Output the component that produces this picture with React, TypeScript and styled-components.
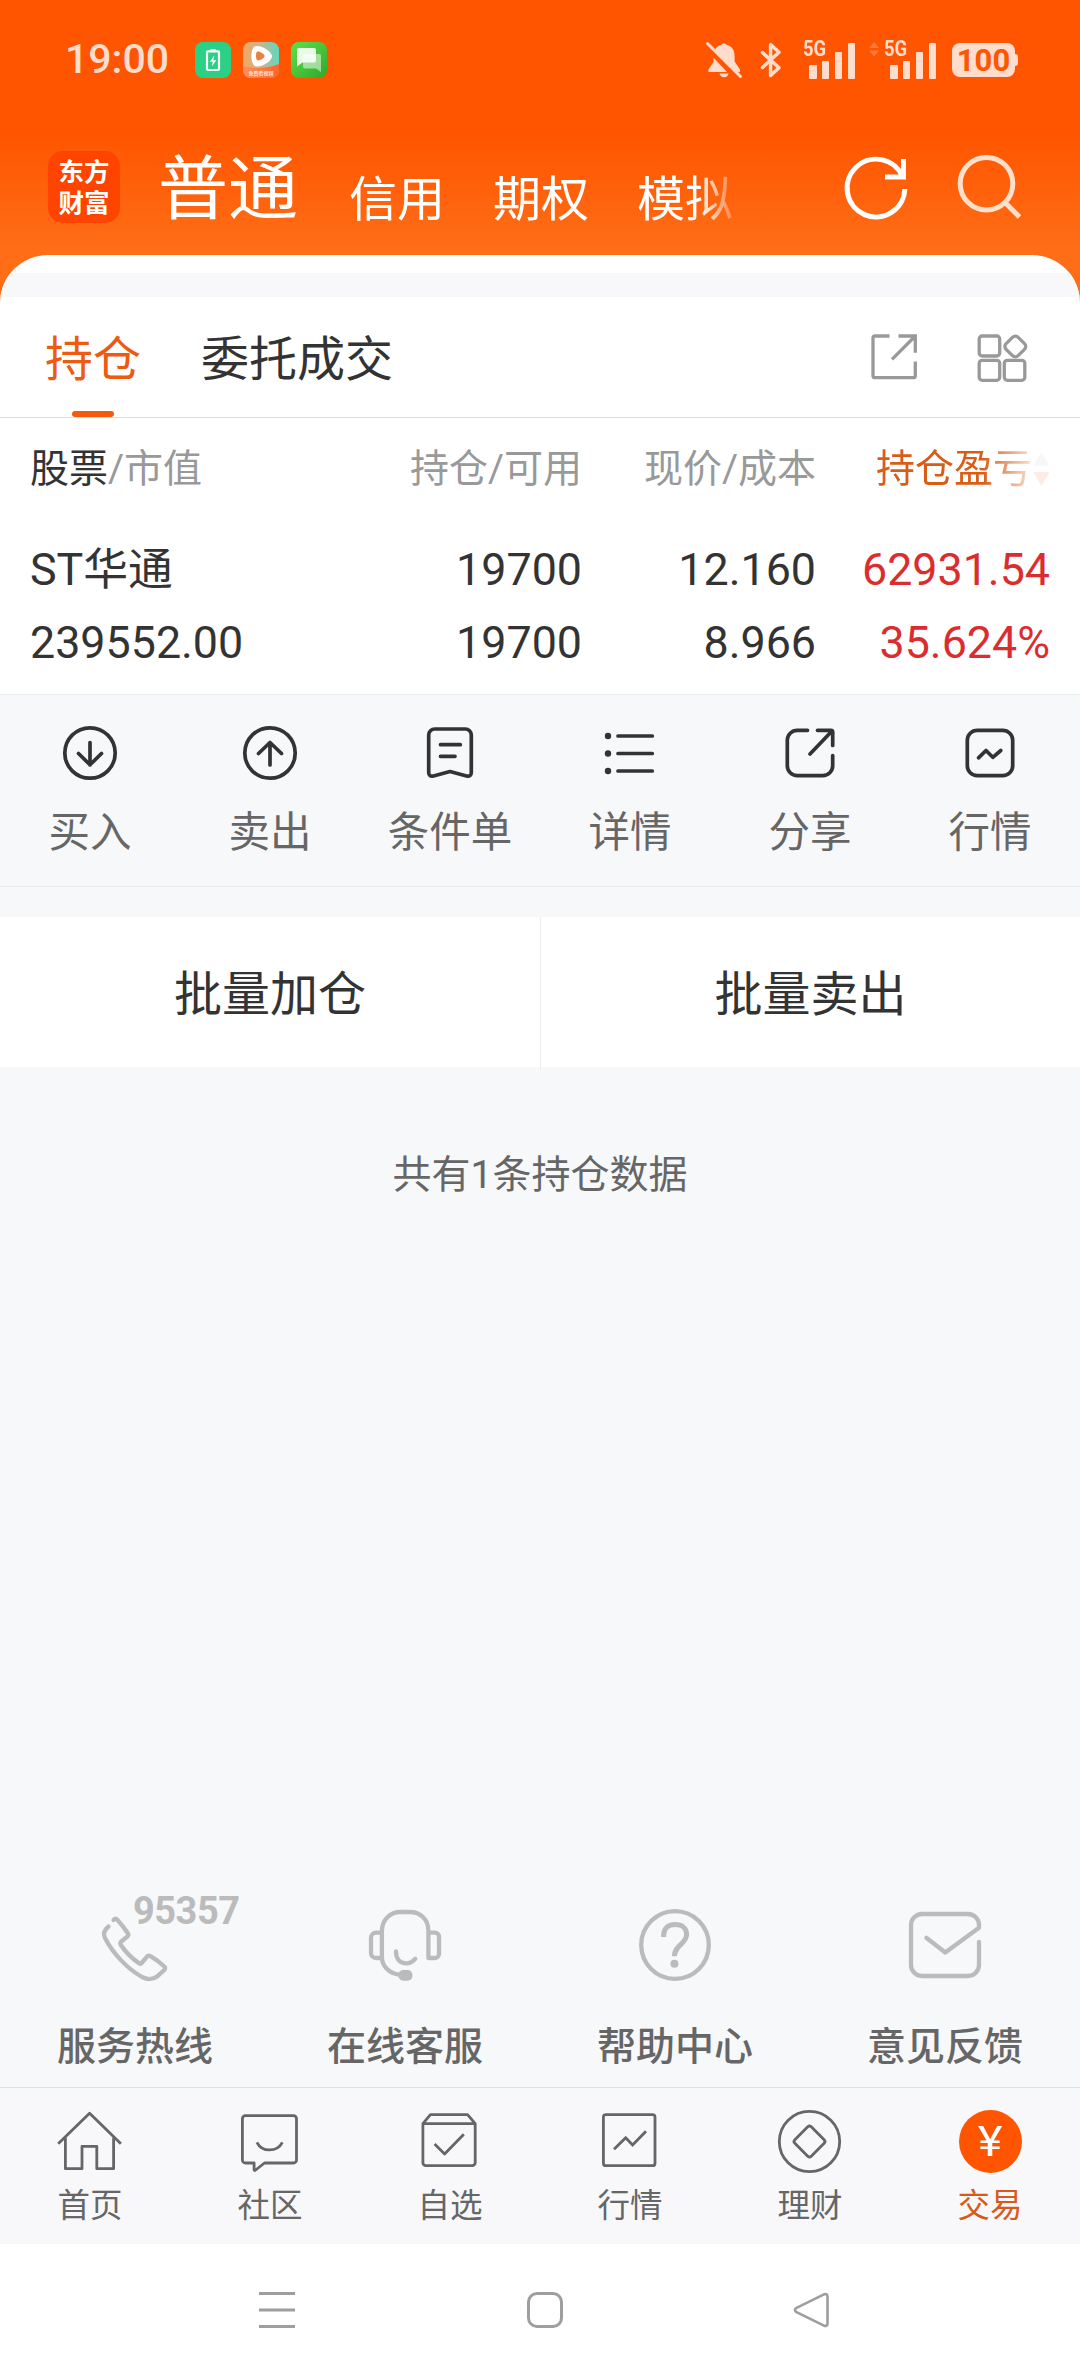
import React from "react";
import styled, { createGlobalStyle } from "styled-components";

const GlobalStyle = createGlobalStyle`
  * { box-sizing: border-box; }
  body {
    margin: 0;
    background: #f7f8fa;
    font-family: Roboto, "Noto Sans CJK SC", sans-serif;
    -webkit-font-smoothing: antialiased;
  }
  svg { display: block; flex: none; overflow: visible; }
`;

const Screen = styled.div`
  width: 1080px;
  height: 2376px;
  display: flex;
  flex-direction: column;
  overflow: hidden;
  background: #f7f8fa;
`;

/* ---------- status bar + header ---------- */

const Hero = styled.header`
  height: 303px;
  margin-bottom: -48px;
  flex: none;
  background: linear-gradient(#ff5500 0, #ff5500 132px, #ff6d17 250px, #ff6d17 100%);
`;

const StatusBar = styled.div`
  height: 120px;
  padding: 0 62px 0 65px;
  display: flex;
  align-items: center;
  color: #ffdccb;
`;

const Clock = styled.span`
  width: 130px;
  font-size: 41px;
  font-weight: 500;
  line-height: 48px;
  padding-bottom: 3px;
`;

const AppBadges = styled.div`
  display: flex;
  gap: 12px;
`;

const StatusIcons = styled.div`
  margin-left: auto;
  display: flex;
  align-items: center;
`;

const Gap = styled.i<{ $w: number }>`
  width: ${(p) => p.$w}px;
`;

const SignalBox = styled.div`
  position: relative;
  width: 52px;
  height: 37px;
  display: flex;
  align-items: flex-end;
  justify-content: flex-end;
  gap: 5.3px;
`;

const SignalBar = styled.i<{ $h: number }>`
  width: 7.5px;
  height: ${(p) => p.$h}px;
  border-radius: 1px;
  background: currentColor;
`;

const SignalTag = styled.span`
  position: absolute;
  left: 0;
  top: -4px;
  font-size: 22px;
  line-height: 22px;
  font-weight: 700;
  transform: scaleX(0.84);
  transform-origin: left;
`;

const Battery = styled.div`
  position: relative;
  width: 63px;
  height: 34px;
  margin-right: 3px;
  border-radius: 8px;
  background: #ffdccb;
  color: #ff5500;
  font-size: 31px;
  line-height: 35px;
  font-weight: 700;
  text-align: center;

  &::after {
    content: "";
    position: absolute;
    right: -3px;
    top: 11px;
    width: 3px;
    height: 12px;
    border-radius: 0 3px 3px 0;
    background: #ffdccb;
  }
`;

const AccountBar = styled.nav`
  height: 135px;
  padding: 0 60px 0 48px;
  display: flex;
  align-items: flex-start;
`;

const Logo = styled.div`
  width: 72px;
  height: 72px;
  margin-top: 31px;
  display: flex;
  flex-direction: column;
  align-items: center;
  justify-content: center;
  border-radius: 15px;
  background: #ff4400;
  color: #fff;
`;

const LogoLine = styled.span`
  font-size: 25.5px;
  line-height: 30px;
  font-weight: 700;
  padding-top: 1px;
`;

const Accounts = styled.div`
  display: flex;
  align-items: baseline;
  gap: 48px;
  margin: 15px 0 0 38px;
  width: 580px;
  height: 110px;
  overflow: hidden;
  color: #fff;
  mask-image: linear-gradient(90deg, #000 540px, transparent 584px);
`;

const Account = styled.span<{ $active?: boolean }>`
  margin-right: ${(p) => (p.$active ? 3 : 0)}px;
  padding-top: ${(p) => (p.$active ? 0 : 2)}px;
  font-size: ${(p) => (p.$active ? 70 : 48)}px;
  line-height: ${(p) => (p.$active ? 110 : 60)}px;
  align-self: ${(p) => (p.$active ? "baseline" : "flex-start")};
  margin-top: ${(p) => (p.$active ? 0 : 33)}px;
  font-weight: 400;
  white-space: nowrap;
`;

const HeaderTools = styled.div`
  margin: 34px 0 0 auto;
  display: flex;
  gap: 44px;
`;

/* ---------- positions card ---------- */

const Card = styled.section`
  flex: none;
  border-radius: 48px 48px 0 0;
  background: #fff;
  overflow: hidden;
`;

const CardStripe = styled.div`
  height: 24px;
  margin-top: 18px;
  background: #f8f8fb;
`;

const Tabs = styled.div`
  height: 121px;
  padding: 0 53px 0 45px;
  display: flex;
  gap: 60px;
  border-bottom: 1px solid #dddddd;
`;

const Tab = styled.div<{ $active?: boolean }>`
  height: 120px;
  padding-top: 33px;
  display: flex;
  flex-direction: column;
  align-items: center;
  justify-content: space-between;
  color: ${(p) => (p.$active ? "#ee5a0f" : "#333")};
  font-size: 48px;
  line-height: 60px;
`;

const TabMark = styled.i`
  width: 42px;
  height: 6px;
  border-radius: 3px;
  background: #f45a0e;
`;

const TabTools = styled.div`
  margin: 36px 0 0 auto;
  display: flex;
  gap: 59px;
`;

const HoldingGrid = styled.div`
  display: grid;
  grid-template-columns: 310px 242px 234px 234px;
  padding: 0 30px;
`;

const Head = styled.div<{ $tone?: "hot" }>`
  height: 102px;
  font-size: 39px;
  line-height: 102px;
  color: ${(p) => (p.$tone ? "#d95c17" : "#999")};
  text-align: right;
  white-space: nowrap;

  &:first-child { text-align: left; }
  em { color: #333; font-style: normal; }
`;

const SortHead = styled(Head)`
  display: flex;
  align-items: center;
  justify-content: flex-end;
  gap: 1px;
  mask-image: linear-gradient(90deg, #000 166px, rgba(0, 0, 0, 0.12) 220px);
`;

const Value = styled.div<{ $up?: boolean }>`
  height: 73px;
  font-size: 44.8px;
  line-height: 73px;
  color: ${(p) => (p.$up ? "#db2d2e" : "#333")};
  text-align: right;
  white-space: nowrap;

  &:nth-child(4n + 1) { text-align: left; }
`;

const Holdings = styled.div`
  height: 276px;
  display: flex;
  flex-direction: column;
  gap: 13px;
`;

/* ---------- actions ---------- */

const Actions = styled.div`
  flex: none;
  height: 193px;
  padding-top: 31px;
  display: grid;
  grid-template-columns: repeat(6, 1fr);
  border-top: 1px solid #ececee;
  border-bottom: 1px solid #ececee;
`;

const Action = styled.div`
  display: flex;
  flex-direction: column;
  align-items: center;
  gap: 28px;
  color: #666;
  font-size: 41.5px;
  line-height: 50px;
`;

const Batch = styled.div`
  flex: none;
  height: 150px;
  margin-top: 30px;
  display: grid;
  grid-template-columns: 540px 540px;
  background: #fff;
`;

const BatchButton = styled.div`
  padding-top: 3px;
  color: #333;
  font-size: 48px;
  line-height: 150px;
  text-align: center;

  & + & { border-left: 1px solid #ededed; }
`;

const Count = styled.p`
  flex: 1;
  margin: 83px 0 0;
  color: #666;
  font-size: 39px;
  line-height: 50px;
  text-align: center;
`;

/* ---------- service row ---------- */

const Services = styled.div`
  flex: none;
  height: 178px;
  display: grid;
  grid-template-columns: repeat(4, 1fr);
`;

const Service = styled.div`
  position: relative;
  display: flex;
  flex-direction: column;
  align-items: center;
  gap: 41px;
  color: #666;
  font-size: 39px;
  line-height: 50px;
  font-weight: 500;
`;

const HotlineNumber = styled.span`
  position: absolute;
  left: 133px;
  top: -18px;
  color: #bbb;
  font-size: 38px;
  line-height: 40px;
  font-weight: 700;
  letter-spacing: -0.5px;
`;

/* ---------- bottom bars ---------- */

const TabBar = styled.nav`
  flex: none;
  height: 157px;
  padding-top: 22px;
  display: grid;
  grid-template-columns: repeat(6, 1fr);
  border-top: 1px solid #dfe0e3;
  background: #f8f8fa;
`;

const TabItem = styled.div<{ $active?: boolean }>`
  display: flex;
  flex-direction: column;
  align-items: center;
  gap: 12px;
  color: ${(p) => (p.$active ? "#d9591a" : "#666")};
  font-size: 32.5px;
  line-height: 40px;
`;

const TradeCoin = styled.div`
  width: 63px;
  height: 63px;
  margin-bottom: 1px;
  border-radius: 50%;
  background: #ff5500;
  color: #fff;
  line-height: 64px;
  text-align: center;
`;

const Yuan = styled.span`
  display: inline-block;
  font-size: 42px;
  font-weight: 400;
  transform: scaleX(1.12);
`;

const SystemNav = styled.footer`
  flex: none;
  height: 132px;
  padding: 0 251px 0 259px;
  display: flex;
  align-items: center;
  justify-content: space-between;
  background: #fff;
`;

/* ---------- icons ---------- */

type IconProps = { size: number; stroke: string; width: number; round?: boolean; children: React.ReactNode };

const Icon = ({ size, stroke, width, round, children }: IconProps) => (
  <svg
    width={size}
    height={size}
    viewBox={`0 0 ${size} ${size}`}
    fill="none"
    stroke={stroke}
    strokeWidth={width}
    strokeLinecap={round ? "round" : "butt"}
    strokeLinejoin={round ? "round" : "miter"}
  >
    {children}
  </svg>
);

const ChargeBadge = () => (
  <svg width="36" height="36" viewBox="0 0 36 36">
    <rect width="36" height="36" rx="8" fill="#2ad184" />
    <rect x="12" y="9.3" width="12" height="18.7" rx="1" fill="none" stroke="#fff" strokeWidth="2.2" />
    <rect x="15.5" y="7" width="5" height="2.5" fill="#fff" />
    <path d="M19.3 13.5 14.8 19.8h3l-1 4.7 4.5-6.3h-3z" fill="#fff" />
  </svg>
);

const VideoBadge = () => (
  <svg width="36" height="36" viewBox="0 0 36 36">
    <defs>
      <linearGradient id="video" x1="0" y1="0.2" x2="1" y2="0.1">
        <stop offset="0" stopColor="#f3a765" />
        <stop offset="0.5" stopColor="#c9b48c" />
        <stop offset="1" stopColor="#54dcc8" />
      </linearGradient>
      <linearGradient id="videoFoot" x1="0" y1="0" x2="1" y2="0">
        <stop offset="0" stopColor="#ff8d5c" />
        <stop offset="1" stopColor="#ff6228" />
      </linearGradient>
      <clipPath id="videoClip"><rect width="36" height="36" rx="8" /></clipPath>
    </defs>
    <g clipPath="url(#videoClip)">
      <rect width="36" height="36" fill="url(#video)" />
      <path d="M0 24Q18 29 36 22V36H0z" fill="url(#videoFoot)" />
      <path d="M11.500 4.500C16.500 1.800 28.500 9 29 14C29.400 19 17 26.500 12 24C7.300 21.500 7.300 7 11.500 4.500z" fill="#fff" />
      <path d="M14.200 9.600C16 8.800 21.500 12 21.600 14C21.700 16 16 19.200 14.200 18.300C12.500 17.400 12.600 10.400 14.200 9.600z" fill="#e8813f" />
      <text x="18" y="33.300" fontSize="5" fontWeight="700" fill="#ffe3d3" textAnchor="middle">免费看视频</text>
    </g>
  </svg>
);

const ChatBadge = () => (
  <svg width="36" height="36" viewBox="0 0 36 36">
    <defs>
      <linearGradient id="chat" x1="0" y1="0" x2="1" y2="1">
        <stop offset="0" stopColor="#63de4b" />
        <stop offset="1" stopColor="#2faa2b" />
      </linearGradient>
    </defs>
    <rect width="36" height="36" rx="8" fill="url(#chat)" />
    <path d="M14 12H28.500Q30 12 30 13.500V30L25 26.500H14Q12 26.500 12 24.500V14Q12 12 14 12z" fill="#fff" opacity="0.5" />
    <path d="M8 6H23Q25 6 25 8V18.500Q25 20.500 23 20.500H11.500L6 24.500V8Q6 6 8 6z" fill="#fff" opacity="0.88" />
  </svg>
);

const MutedBell = () => (
  <svg width="36" height="36" viewBox="0 0 36 36">
    <path d="M17.900 1.300q2 0 2.400 1.500C26 4 28.600 8.500 28.600 14v5.500L34 27.500V30H2.400v-2.300L7.500 20v-6C7.500 8.500 10.500 4 15.500 2.800q.4-1.500 2.400-1.500z" fill="currentColor" />
    <path d="M13.400 31.600h9.300q-1 3.700-4.600 3.700t-4.700-3.700z" fill="currentColor" />
    <path d="M-1 2.500 31 36.500" stroke="#ff5500" strokeWidth="5.500" />
    <path d="M1.500 1.500 34.500 34.500" stroke="currentColor" strokeWidth="3" strokeLinecap="round" />
  </svg>
);

const Bluetooth = () => (
  <svg width="22" height="36" viewBox="0 0 22 36" fill="none" stroke="currentColor" strokeWidth="3.500" strokeLinejoin="round" strokeLinecap="round">
    <path d="M2.500 10.500 19 25.800 10.600 33.500V2.500L19 10.200 2.500 25.500" />
  </svg>
);

const Signal = () => (
  <SignalBox>
    <SignalTag>5G</SignalTag>
    <SignalBar $h={14} />
    <SignalBar $h={18} />
    <SignalBar $h={27} />
    <SignalBar $h={36} />
  </SignalBox>
);

const SortArrows = () => (
  <svg width="17" height="34" viewBox="0 0 17 34">
    <path d="M8.500 0 16.500 13.500H.5z" fill="#b8bcc4" />
    <path d="M8.500 34 .5 20H16.500z" fill="#f2601c" />
  </svg>
);

const actionIcon = { size: 54, stroke: "#333", width: 3.7, round: true };
const actions = [
  { label: "买入", art: <><circle cx="27" cy="27" r="25.200" /><path d="M27 16.500V39M15.500 27.500 27 38.800 38.500 27.500" /></> },
  { label: "卖出", art: <><circle cx="27" cy="27" r="25.200" /><path d="M27 39V16.500M15.500 27.500 27 16.500 38.500 27.500" /></> },
  {
    label: "条件单",
    art: <path d="M11.700 3H42.300a6 6 0 0 1 6 6V46.500Q48.300 51 43.500 50L27 45.500 10.500 50Q5.700 51 5.700 46.500V9a6 6 0 0 1 6-6zM17.500 18.700H37.300M17.500 30.300H32" />,
  },
  {
    label: "详情",
    art: <><path d="M15 10H49.300M15 27.500H49.300M15 45H49.300" /><g fill="#333" stroke="none"><circle cx="5" cy="10" r="3.200" /><circle cx="5" cy="27.500" r="3.200" /><circle cx="5" cy="45" r="3.200" /></g></>,
  },
  {
    label: "分享",
    art: <path d="M24.500 4.300H14.300a10 10 0 0 0-10 10V39.700a10 10 0 0 0 10 10H39.700a10 10 0 0 0 10-10V29.500M34.500 4.300H48q1.700 0 1.700 1.700V19.500M48.800 5.200 27 28" />,
  },
  {
    label: "行情",
    art: <><rect x="4.300" y="4.300" width="45.400" height="45.400" rx="10" /><path d="M15.500 31.800 23 24.500 29.800 31.300 37.800 24.500" /></>,
  },
];

const serviceIcon = { size: 72, stroke: "#bbb", width: 4.3, round: true };
const services = [
  {
    label: "服务热线",
    note: "95357",
    art: <path d="M14.500 11Q16.500 8.500 18.500 11 24 17 29 24.500 30 26 28.500 27.300L21.800 33Q20.800 34.200 21.600 35.500C26 42.500 32.500 49 40 54.300Q41.500 55.300 42.600 54L47.800 47.800Q49.300 45.800 51.500 47.200 58.500 51.300 65.300 57.500 66.800 59.200 65.300 61L58.500 67.200Q51.500 72.500 43 68C28 59.500 14 44.500 6 29 3.200 23.500 6.500 20 9.500 17.500 11 14.500 14.500 11z" />,
  },
  {
    label: "在线客服",
    art: (
      <>
        <path d="M30.500 65.700C20 64.500 12.900 57 12.900 48V22C13 10 22 3 31 3H41C51 3 59.400 10 59.400 22V49H66a4 4 0 0 0 4-4V28a4.300 4.300 0 0 0-4-4.300H59.400M12.900 23.700H7a5 5 0 0 0-5 5V44a5 5 0 0 0 5 5H12.900M27 42.500C27 50 31 54.300 37.300 54.300Q42 54.300 46.300 49.700" />
        <rect x="29.400" y="61" width="14.100" height="10.700" rx="5" fill="#bbb" stroke="none" />
      </>
    ),
  },
  {
    label: "帮助中心",
    art: (
      <>
        <circle cx="36" cy="36" r="33.800" />
        <path strokeLinecap="butt" strokeWidth="5" d="M24.700 28V26C24.700 19 29.500 15.600 36.300 15.600 43.300 15.600 47.600 19.500 47.600 25.500 47.600 35 35.400 36 35.400 47.300" />
        <circle cx="35.400" cy="54.700" r="4" fill="#bbb" stroke="none" />
      </>
    ),
  },
  {
    label: "意见反馈",
    art: <path d="M70 33V56A11 11 0 0 1 59 67H13A11 11 0 0 1 2 56V16A11 11 0 0 1 13 5H59A11 11 0 0 1 70 16V18.700L36.300 43.500 17.300 28.700" />,
  },
];

const tabIcon = { size: 64, stroke: "#666", width: 2.8 };
const tabs = [
  { label: "首页", art: <path strokeLinejoin="round" d="M.2 33.700 31.600 3.300 62.900 33.700M7.400 27.700V58.700H24V36.300H38.800V58.700H55.600V27.700" /> },
  { label: "社区", art: <path strokeLinejoin="round" d="M7.400 5.700H55.500a3 3 0 0 1 3 3V50a3 3 0 0 1-3 3H26.500L17 60.500 16.100 60V53H7.400a3 3 0 0 1-3-3V8.700a3 3 0 0 1 3-3zM18.900 32.300C24 42.500 39 42.500 44.400 32.300" /> },
  { label: "自选", art: <path strokeLinejoin="round" d="M4.900 13.700V52.700a3 3 0 0 0 3 3H54.200a3 3 0 0 0 3-3V13.700zL12.400 4.700H49.600L57.200 13.700M16.600 34 26.600 44 45.800 24.300" /> },
  { label: "行情", art: <><rect x="5.400" y="4.700" width="51.600" height="51" rx="2.500" /><path d="M16 39.300 27.700 27.700 34.600 35 48 21.300" /></> },
  { label: "理财", art: <><circle cx="31.500" cy="31.500" r="30.200" /><rect x="19.900" y="19.900" width="23.200" height="23.200" rx="2.500" transform="rotate(45 31.500 31.500)" /></> },
];

const navIcon = { size: 36, stroke: "#9e9e9e", width: 3 };

export default function App() {
  return (
    <>
      <GlobalStyle />
      <Screen>
        <Hero>
          <StatusBar>
            <Clock>19:00</Clock>
            <AppBadges>
              <ChargeBadge />
              <VideoBadge />
              <ChatBadge />
            </AppBadges>
            <StatusIcons>
              <MutedBell />
              <Gap $w={18} />
              <Bluetooth />
              <Gap $w={21} />
              <Signal />
              <Gap $w={14} />
              <svg width="10" height="36" viewBox="0 0 10 36" fill="#ff7a3c">
                <path d="M5 0 10 6H0zM5 14.500 0 8.500H10z" />
              </svg>
              <Gap $w={5} />
              <Signal />
              <Gap $w={16} />
              <Battery>100</Battery>
            </StatusIcons>
          </StatusBar>
          <AccountBar>
            <Logo>
              <LogoLine>东方</LogoLine>
              <LogoLine>财富</LogoLine>
            </Logo>
            <Accounts>
              <Account $active>普通</Account>
              <Account>信用</Account>
              <Account>期权</Account>
              <Account>模拟</Account>
            </Accounts>
            <HeaderTools>
              <Icon size={66} stroke="#fff" width={5}>
                <path d="M60.900 35A28.900 28.900 0 1 1 58.500 22.500" />
                <path d="M59.500 5V23H41" />
              </Icon>
              <Icon size={66} stroke="#ffe0cc" width={5}>
                <circle cx="32.500" cy="29.700" r="26.300" />
                <path d="M51 48.500 65.500 63" />
              </Icon>
            </HeaderTools>
          </AccountBar>
        </Hero>

        <Card>
          <CardStripe />
          <Tabs>
            <Tab $active>持仓<TabMark /></Tab>
            <Tab>委托成交</Tab>
            <TabTools>
              <Icon size={48} stroke="#999" width={3.3}>
                <path d="M19.500 3H5Q3 3 3 5V42.700Q3 44.700 5 44.700H43.300Q45.300 44.700 45.300 42.700V28.500M28.500 3H45.300V19.700M44.800 3.500 22 26.300" />
              </Icon>
              <Icon size={50} stroke="#999" width={3.3}>
                <rect x="2.200" y="3" width="20.500" height="20" rx="3" />
                <rect x="2.200" y="27.300" width="20.500" height="20" rx="3" />
                <rect x="27.300" y="27.300" width="20.500" height="20" rx="3" />
                <rect x="29.800" y="5" width="17" height="17" rx="4" transform="rotate(45 38.300 13.500)" />
              </Icon>
            </TabTools>
          </Tabs>
          <Holdings>
            <HoldingGrid>
              <Head><em>股票</em>/市值</Head>
              <Head>持仓/可用</Head>
              <Head>现价/成本</Head>
              <SortHead $tone="hot">持仓盈亏<SortArrows /></SortHead>
            </HoldingGrid>
            <HoldingGrid>
              <Value>ST华通</Value>
              <Value>19700</Value>
              <Value>12.160</Value>
              <Value $up>62931.54</Value>
              <Value>239552.00</Value>
              <Value>19700</Value>
              <Value>8.966</Value>
              <Value $up>35.624%</Value>
            </HoldingGrid>
          </Holdings>
        </Card>

        <Actions>
          {actions.map((a) => (
            <Action key={a.label}>
              <Icon {...actionIcon}>{a.art}</Icon>
              {a.label}
            </Action>
          ))}
        </Actions>

        <Batch>
          <BatchButton>批量加仓</BatchButton>
          <BatchButton>批量卖出</BatchButton>
        </Batch>

        <Count>共有1条持仓数据</Count>

        <Services>
          {services.map((s) => (
            <Service key={s.label}>
              <Icon {...serviceIcon}>{s.art}</Icon>
              {s.note && <HotlineNumber>{s.note}</HotlineNumber>}
              {s.label}
            </Service>
          ))}
        </Services>

        <TabBar>
          {tabs.map((t) => (
            <TabItem key={t.label}>
              <Icon {...tabIcon}>{t.art}</Icon>
              {t.label}
            </TabItem>
          ))}
          <TabItem $active>
            <TradeCoin><Yuan>¥</Yuan></TradeCoin>
            交易
          </TabItem>
        </TabBar>

        <SystemNav>
          <Icon {...navIcon}><path d="M0 1.500H36M0 18H36M0 34.500H36" /></Icon>
          <Icon {...navIcon}><rect x="2.500" y="1.500" width="33" height="33" rx="8.500" /></Icon>
          <Icon {...navIcon} round width={2.6}><path d="M31 2.300 3.500 15.800Q.5 18 3.500 20.200L31 33.700Q34.500 34.500 34.500 31.500V4.500Q34.500 1.500 31 2.300z" /></Icon>
        </SystemNav>
      </Screen>
    </>
  );
}
